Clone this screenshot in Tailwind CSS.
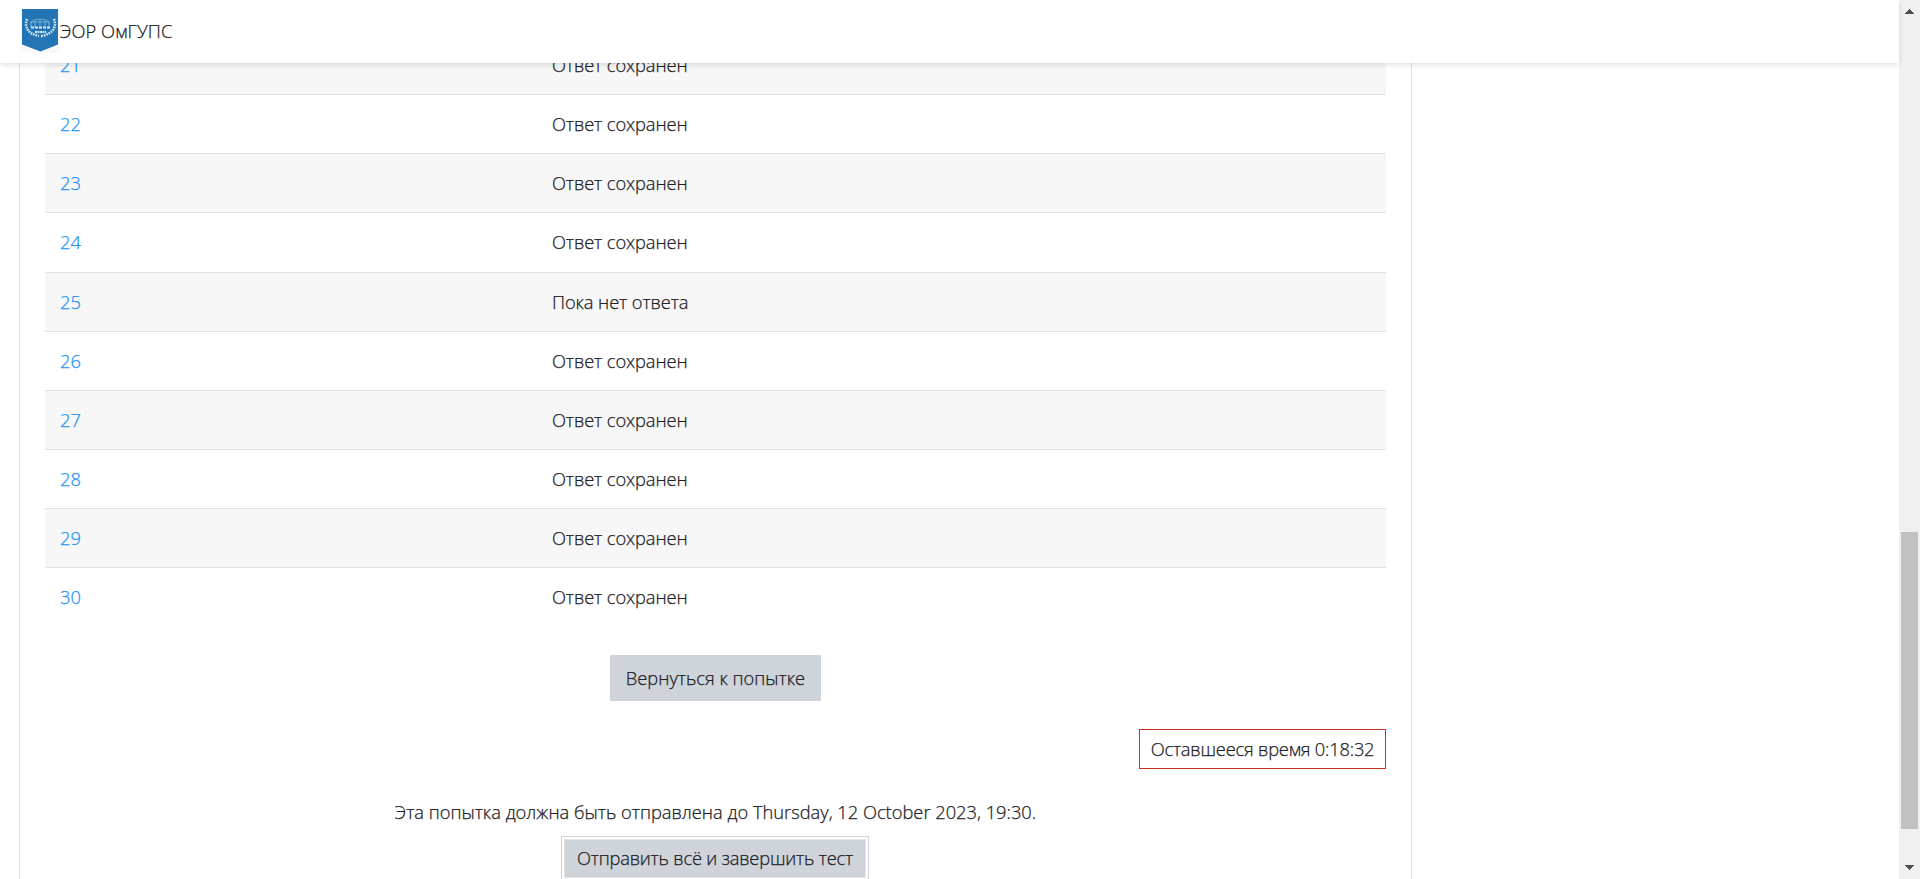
<!DOCTYPE html>
<html lang="ru">
<head>
<meta charset="utf-8">
<title>ЭОР ОмГУПС</title>
<script src="https://cdn.jsdelivr.net/npm/@tailwindcss/browser@4"></script>
</head>
<body class="h-screen overflow-hidden bg-white font-['Open_Sans','Noto_Sans',sans-serif] text-[18.3px] leading-[28.125px] font-light [-webkit-text-stroke:0.25px_currentColor] text-[#1d2125]">
<div class="flex h-[879px]">
  <div class="flex h-full w-[1899px] flex-col">
    <header class="z-10 flex h-[63px] shrink-0 items-center bg-white pl-5 shadow-[0_2px_5px_rgba(0,0,0,0.12)]">
      <svg class="-mt-[1px] h-11 w-10" viewBox="0 0 40 44">
        <rect width="40" height="44" fill="#f8f9f9"/>
        <path d="M2 0H38V35.500L20.500 42.500L2 35.500Z" fill="#2374b5"/>
        <g fill="none" stroke="#d5e8f6">
          <path d="M7 10C4 18 8 25 19 27M34 10C37 18 33 25 21 27" stroke-width="2.600" stroke-dasharray="1.600 1"/>
          <path d="M10 14C14 9 26 9 30 14M11 18V13H29V18M15 12V18M20 11V18M25 12V18" stroke="#7fb3da" stroke-width="1"/>
          <path d="M11 18.500H30" stroke-width="2" stroke-dasharray="3 1"/>
          <path d="M15 23H26" stroke-width="2.200" stroke-dasharray="2 .5"/>
        </g>
      </svg>
      <span class="whitespace-nowrap tracking-[0.1px]">ЭОР ОмГУПС</span>
    </header>
    <main class="ml-[19px] h-[816px] w-[1393px] overflow-hidden border-x border-[#dee2e6] px-[25px]">
      <table class="-mt-[27.950px] w-[1341px] table-fixed border-collapse">
        <colgroup><col class="w-[492px]"><col></colgroup>
        <tbody id="rows"></tbody>
      </table>
      <div class="mt-[27.800px] flex justify-center"><button class="h-[46px] w-[211px] whitespace-nowrap bg-[#ced4da]">Вернуться к попытке</button></div>
      <div class="mt-7 flex justify-end"><div class="flex h-10 w-[247px] items-center justify-center whitespace-nowrap border border-[#ca3120] tracking-[-0.2px]">Оставшееся время 0:18:32</div></div>
      <p class="mt-[29px] whitespace-nowrap text-center">Эта попытка должна быть отправлена до Thursday, 12 October 2023, 19:30.</p>
      <div class="mt-[10px] mr-[1px] flex justify-center"><div class="h-[52px] w-[308px] border border-[#ced4da] p-[2px]"><button class="h-[39px] w-full whitespace-nowrap border border-[#e2e6ea] bg-[#ced4da] tracking-[-0.2px]">Отправить всё и завершить тест</button></div></div>
    </main>
  </div>
  <aside class="flex h-full w-[21px] flex-col items-center bg-[#f0f0f0]">
    <svg class="mt-[9px] h-[5px] w-[9px]" viewBox="0 0 9 5" shape-rendering="crispEdges"><path d="M4 0h1v1h1v1h1v1h1v1h1v1H0V4h1V3h1V2h1V1h1z" fill="#505050"/></svg>
    <div class="mt-[518px] h-[297px] w-[17px] bg-[#c1c1c1]"></div>
    <svg class="mt-[36px] h-[5px] w-[9px]" viewBox="0 0 9 5" shape-rendering="crispEdges"><path d="M0 0h9v1H8v1H7v1H6v1H5v1H4V4H3V3H2V2H1V1H0z" fill="#505050"/></svg>
  </aside>
</div>
<script>
document.getElementById('rows').innerHTML = [21,22,23,24,25,26,27,28,29,30].map(n =>
  `<tr class="h-[59.125px] odd:bg-[#f7f7f7]"><td class="border-t border-[#dee2e6] px-[15px]"><a class="text-[#1f93f5]">${n}</a></td><td class="border-t border-[#dee2e6] px-[15px] tracking-[-0.1px]">${n === 25 ? 'Пока нет ответа' : 'Ответ сохранен'}</td></tr>`).join('');
</script>
</body>
</html>
